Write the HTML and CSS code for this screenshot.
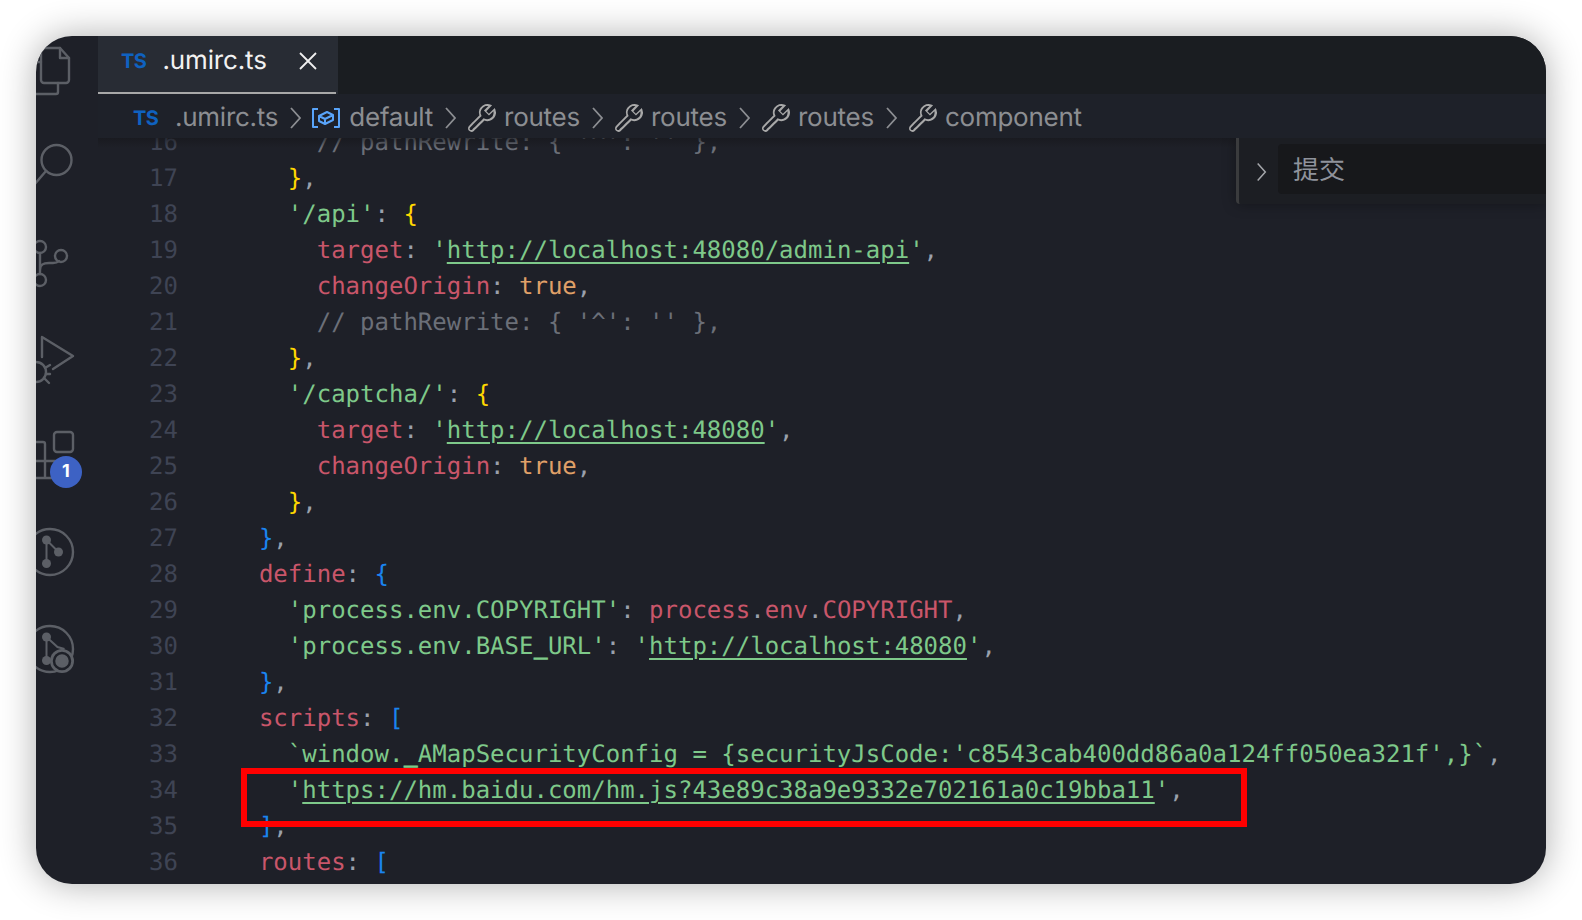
FILE: index.html
```html
<!DOCTYPE html>
<html lang="zh">
<head>
<meta charset="utf-8">
<title>.umirc.ts</title>
<link rel="stylesheet" href="styles.css">
</head>
<body>
<svg class="defs" width="0" height="0"><defs>
<path id="wrench" d="M2.807 14.975a1.75 1.75 0 0 1-1.255-.556 1.684 1.684 0 0 1-.544-1.1A1.72 1.72 0 0 1 1.36 12.1c1.208-1.27 3.587-3.65 5.318-5.345a4.257 4.257 0 0 1 .048-3.078 4.095 4.095 0 0 1 1.665-1.969 4.259 4.259 0 0 1 4.04-.36l.617.268-2.866 2.951 1.255 1.259 2.944-2.877.267.619a4.295 4.295 0 0 1 .04 3.311 4.198 4.198 0 0 1-.923 1.392 4.27 4.27 0 0 1-.743.581 4.217 4.217 0 0 1-3.812.446c-1.098 1.112-3.84 3.872-5.32 5.254a1.63 1.63 0 0 1-1.084.423zm7.938-13.047a3.32 3.32 0 0 0-1.849.557c-.213.13-.412.284-.591.458a3.321 3.321 0 0 0-.657 3.733l.135.297-.233.227c-1.738 1.697-4.269 4.22-5.485 5.504a.805.805 0 0 0-.132 1.05.911.911 0 0 0 .298.22c.1.044.209.069.319.072a.732.732 0 0 0 .515-.225c1.549-1.444 4.491-4.413 5.478-5.411l.227-.23.3.131a3.318 3.318 0 0 0 3.744-.655 3.22 3.22 0 0 0 .716-1.078 3.382 3.382 0 0 0 .24-1.349 3.591 3.591 0 0 0-.072-.641l-2.213 2.163-2.5-2.5 2.204-2.268a3.4 3.4 0 0 0-.716-.055z"/>
<path id="chev" d="M2 1l9 10-9 10"/>
</defs></svg>
<div class="window">
  <nav class="activity">
    <svg class="act act-first" viewBox="0 0 62 97"><g class="ico"><path d="M5 60V32a4 4 0 0 1 4-4h15l9 10v22a3 3 0 0 1-3 3H8a3 3 0 0 1-3-3z"/><path d="M24 28v10h9"/><path d="M22 63v9a2 2 0 0 1-2 2H-4M-4 42h9"/></g></svg>
    <svg class="act" viewBox="0 0 62 97"><g class="ico"><circle cx="20.500" cy="43" r="15"/><path d="M10 54L-2 68"/></g></svg>
    <svg class="act" viewBox="0 0 62 97"><g class="ico"><circle cx="4" cy="33" r="6"/><circle cx="25" cy="42" r="6"/><circle cx="4" cy="66" r="6"/><path d="M4 39v21M4 56c0-6 4-7 9-7h4c3 0 5-1 6-2"/></g></svg>
    <svg class="act" viewBox="0 0 62 97"><g class="ico"><path d="M6 46V26l31 19-20 13"/><circle cx="0" cy="61" r="10"/><path d="M14 54l-5 3M14 63h-4M13 72l-5-5"/></g></svg>
    <div class="ext">
      <svg class="act" viewBox="0 0 62 97"><g class="ico"><rect x="18" y="24" width="19" height="20" rx="3"/><path d="M-4 34h11a2 2 0 0 1 2 2v34M-4 53h27v17M-4 70h27"/></g></svg>
      <span class="badge">1</span>
    </div>
    <svg class="act" viewBox="0 0 62 97"><g class="ico"><circle cx="14" cy="47" r="23"/></g><g class="dots"><circle cx="10.500" cy="35" r="4.500"/><circle cx="22.500" cy="47" r="4.500"/><circle cx="10.500" cy="58.500" r="4.500"/></g><path class="ico-thin" d="M10.500 35v24M10.500 35l12 12"/></svg>
    <svg class="act" viewBox="0 0 62 97"><g class="ico"><circle cx="14" cy="47" r="23"/></g><g class="dots"><circle cx="10.500" cy="35" r="4.500"/><circle cx="10.500" cy="58.500" r="4.500"/></g><path class="ico-thin" d="M10.500 35v24M10.500 35l11 10 7 2"/><circle class="lens-bg" cx="26" cy="59" r="12"/><circle class="ico-lens" cx="26" cy="59" r="8"/><circle class="dots" cx="26" cy="59" r="4.500"/></svg>
  </nav>
  <main class="main">
    <div class="tabs">
      <div class="tab">
        <span class="ts">TS</span>
        <span class="tab-name">.umirc.ts</span>
        <svg class="close" viewBox="0 0 20 20"><path d="M2 2l16 16M18 2L2 18"/></svg>
      </div>
    </div>
    <div class="crumbs">
      <span class="ts">TS</span><span class="c-name">.umirc.ts</span>
      <svg class="sep" viewBox="0 0 13 22"><use href="#chev"/></svg>
      <svg class="mod" viewBox="0 0 30 22"><path class="mod-b" d="M7 2H2v18h5M23 2h5v18h-5"/><path class="mod-c" d="M8 9l8-4 6 3v5l-8 4-6-3zM8 9l6 3 8-4M14 12v5"/></svg>
      <span class="c-item c-def">default</span>
      <svg class="sep" viewBox="0 0 13 22"><use href="#chev"/></svg>
      <svg class="wr" viewBox="0 0 16 16"><use href="#wrench"/></svg><span class="c-item">routes</span>
      <svg class="sep" viewBox="0 0 13 22"><use href="#chev"/></svg>
      <svg class="wr" viewBox="0 0 16 16"><use href="#wrench"/></svg><span class="c-item">routes</span>
      <svg class="sep" viewBox="0 0 13 22"><use href="#chev"/></svg>
      <svg class="wr" viewBox="0 0 16 16"><use href="#wrench"/></svg><span class="c-item">routes</span>
      <svg class="sep" viewBox="0 0 13 22"><use href="#chev"/></svg>
      <svg class="wr" viewBox="0 0 16 16"><use href="#wrench"/></svg><span class="c-item">component</span>
    </div>
    <div class="editor">
      <div class="code">
        <div class="line"><span class="ln">16</span><span class="src">      <i class="cm">// pathRewrite: { '^': '' },</i></span></div>
        <div class="line"><span class="ln">17</span><span class="src">    <i class="y">}</i><i class="p">,</i></span></div>
        <div class="line"><span class="ln">18</span><span class="src">    <i class="s">'/api'</i><i class="p">:</i> <i class="y">{</i></span></div>
        <div class="line"><span class="ln">19</span><span class="src">      <i class="k">target</i><i class="p">:</i> <i class="s">'<u>http://localhost:48080/admin-api</u>'</i><i class="p">,</i></span></div>
        <div class="line"><span class="ln">20</span><span class="src">      <i class="k">changeOrigin</i><i class="p">:</i> <i class="b">true</i><i class="p">,</i></span></div>
        <div class="line"><span class="ln">21</span><span class="src">      <i class="cm">// pathRewrite: { '^': '' },</i></span></div>
        <div class="line"><span class="ln">22</span><span class="src">    <i class="y">}</i><i class="p">,</i></span></div>
        <div class="line"><span class="ln">23</span><span class="src">    <i class="s">'/captcha/'</i><i class="p">:</i> <i class="y">{</i></span></div>
        <div class="line"><span class="ln">24</span><span class="src">      <i class="k">target</i><i class="p">:</i> <i class="s">'<u>http://localhost:48080</u>'</i><i class="p">,</i></span></div>
        <div class="line"><span class="ln">25</span><span class="src">      <i class="k">changeOrigin</i><i class="p">:</i> <i class="b">true</i><i class="p">,</i></span></div>
        <div class="line"><span class="ln">26</span><span class="src">    <i class="y">}</i><i class="p">,</i></span></div>
        <div class="line"><span class="ln">27</span><span class="src">  <i class="bl">}</i><i class="p">,</i></span></div>
        <div class="line"><span class="ln">28</span><span class="src">  <i class="k">define</i><i class="p">:</i> <i class="bl">{</i></span></div>
        <div class="line"><span class="ln">29</span><span class="src">    <i class="s">'process.env.COPYRIGHT'</i><i class="p">:</i> <i class="k">process</i><i class="p">.</i><i class="k">env</i><i class="p">.</i><i class="k">COPYRIGHT</i><i class="p">,</i></span></div>
        <div class="line"><span class="ln">30</span><span class="src">    <i class="s">'process.env.BASE<b class="us">_</b>URL'</i><i class="p">:</i> <i class="s">'<u>http://localhost:48080</u>'</i><i class="p">,</i></span></div>
        <div class="line"><span class="ln">31</span><span class="src">  <i class="bl">}</i><i class="p">,</i></span></div>
        <div class="line"><span class="ln">32</span><span class="src">  <i class="k">scripts</i><i class="p">:</i> <i class="bl">[</i></span></div>
        <div class="line"><span class="ln">33</span><span class="src">    <i class="s">`window.<b class="us">_</b>AMapSecurityConfig = {securityJsCode:'c8543cab400dd86a0a124ff050ea321f',}`</i><i class="p">,</i></span></div>
        <div class="line"><span class="ln">34</span><span class="src">    <i class="s">'<u>https://hm.baidu.com/hm.js?43e89c38a9e9332e702161a0c19bba11</u>'</i><i class="p">,</i></span></div>
        <div class="line"><span class="ln">35</span><span class="src">  <i class="bl">]</i><i class="p">,</i></span></div>
        <div class="line"><span class="ln">36</span><span class="src">  <i class="k">routes</i><i class="p">:</i> <i class="bl">[</i></span></div>
      </div>
      <div class="top-shade"></div>
      <div class="commit">
        <svg class="commit-chev" viewBox="0 0 13 22"><use href="#chev"/></svg>
        <div class="commit-input">提交</div>
      </div>
      <div class="redbox"></div>
    </div>
  </main>
</div>
</body>
</html>
```
FILE: styles.css
```css
* { box-sizing: border-box; }
html, body { margin: 0; height: 100%; background: #fff; }
body { padding: 36px; overflow: hidden; text-rendering: geometricPrecision; }
.defs { position: absolute; }
i { font-style: normal; }

.window {
  display: flex;
  width: 1510px;
  height: 848px;
  border-radius: 36px;
  overflow: hidden;
  background: #1e2028;
  box-shadow: 0 0 36px rgba(0, 0, 0, .32);
}

/* activity bar */
.activity {
  flex: 0 0 62px;
  display: flex;
  flex-direction: column;
  overflow: hidden;
}
.act { display: block; width: 62px; height: 97px; flex: none; overflow: visible; }
.act-first { margin-top: -16px; }
.ico { fill: none; stroke: #5c5f66; stroke-width: 2.4; stroke-linecap: round; stroke-linejoin: round; }
.ico-thin { fill: none; stroke: #5c5f66; stroke-width: 2; }
.dots { fill: #5c5f66; }
.lens-bg { fill: #5c5f66; }
.ico-lens { fill: none; stroke: #1e2028; stroke-width: 2.5; }
.ext { position: relative; flex: none; height: 97px; }
.badge {
  position: absolute;
  left: 14px;
  top: 48px;
  width: 32px;
  height: 32px;
  border-radius: 50%;
  background: #3d62c4;
  color: #fff;
  font: 700 18px/32px "Inter", sans-serif;
  text-align: center;
}

/* main column */
.main { flex: 1; min-width: 0; display: flex; flex-direction: column; }
.tabs { flex: 0 0 58px; background: #1a1d21; display: flex; }
.tab {
  position: relative;
  width: 240px;
  display: flex;
  align-items: center;
  padding: 0 20px 8px 23px;
  background: #282c34;
}
.tab::after {
  content: "";
  position: absolute;
  left: 0; bottom: 0;
  width: 238px;
  height: 2px;
  background: #a8a8a8;
}
.ts { font: 700 20px/1 "Inter", sans-serif; color: #0f62c0; letter-spacing: -.5px; }
.tab-name {
  margin-left: 16px;
  flex: 1;
  font: 400 26px/1 "Inter", sans-serif;
  letter-spacing: -.15px;
  color: #f2f2f2;
}
.close { width: 20px; height: 20px; fill: none; stroke: #f0f0f0; stroke-width: 1.8; }

.crumbs {
  flex: 0 0 44px;
  display: flex;
  align-items: center;
  padding: 3px 0 0 35px;
  background: #1e2129;
  font: 400 26px/1 "Inter", sans-serif;
  letter-spacing: -.25px;
  color: #8c8e92;
}
.c-name { margin-left: 16.5px; }
.c-item { margin-left: 6px; }
.c-def { margin-left: 8px; }
.sep { width: 13px; height: 22px; margin: 0 9px 0 11px; fill: none; stroke: #8c8e92; stroke-width: 1.8; }
.mod { width: 30px; height: 22px; fill: none; }
.mod-b, .mod-c { stroke: #59a4f9; stroke-width: 2; stroke-linejoin: round; }
.wr { width: 32px; height: 32px; fill: #a8a8a8; }

/* editor */
.editor { position: relative; flex: 1; min-height: 0; overflow: hidden; }
.code { margin-top: -14px; font: 400 24px/36px "DejaVu Sans Mono", monospace; color: #9aa0ac; }
.line { display: flex; height: 36px; white-space: pre; }
.ln { flex: 0 0 80px; text-align: right; color: #3f4454; }
.src { margin-left: 52px; }
.cm { color: #6b6f78; }
.y { color: #ffd700; }
.bl { color: #1a84f0; }
.p { color: #9aa0ac; }
.s { color: #7ec98a; }
.k { color: #c9566a; }
.b { color: #e0a068; }
.us { font-weight: 700; }
u { text-decoration: underline 2px; text-underline-offset: 4px; }

.top-shade {
  position: absolute;
  left: 0; right: 0; top: 0;
  height: 10px;
  background: linear-gradient(#16171b99, #1e202800);
}
.commit {
  position: absolute;
  top: 0; right: 0;
  width: 310px;
  height: 66px;
  display: flex;
  align-items: flex-start;
  padding: 6px 0 0 17px;
  background: #1c1e23;
  border-left: 3px solid #3a3b3d;
  border-bottom-left-radius: 4px;
  box-shadow: 0 0 14px rgba(0, 0, 0, .35);
}
.commit-chev { width: 11px; height: 22px; margin: 17px 11px 0 0; fill: none; stroke: #a4a6aa; stroke-width: 1.8; }
.commit-input {
  flex: 1;
  height: 50px;
  padding-left: 15px;
  background: #17181b;
  border-radius: 4px 0 0 4px;
  color: #8f939c;
  font: 400 26px/50px "Noto Sans CJK SC", sans-serif;
}
.redbox {
  position: absolute;
  left: 143px;
  top: 630px;
  width: 1006px;
  height: 59px;
  border: 6px solid #f00;
}
```
